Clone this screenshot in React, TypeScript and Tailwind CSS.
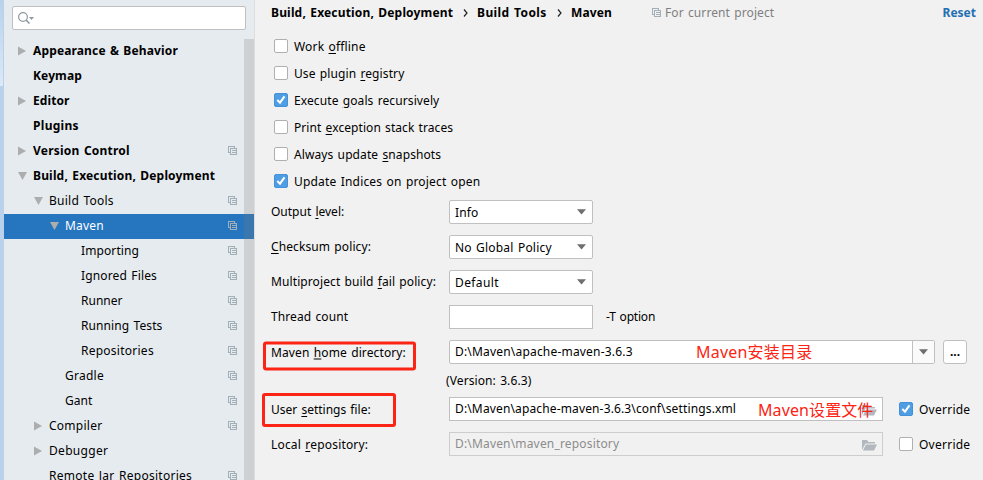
import React from "react";

type Node = { label: string; pad: string; arrow?: "right" | "down"; bold?: boolean; copy?: boolean; selected?: boolean; track: string };

const nodes: Node[] = [
  { label: "Appearance & Behavior", pad: "pl-[13px]", arrow: "right", bold: true, track: "tracking-[0.14px]" },
  { label: "Keymap", pad: "pl-[13px]", bold: true, track: "tracking-[0.12px]" },
  { label: "Editor", pad: "pl-[13px]", arrow: "right", bold: true, track: "tracking-[0.1px]" },
  { label: "Plugins", pad: "pl-[13px]", bold: true, track: "tracking-[0.3px]" },
  { label: "Version Control", pad: "pl-[13px]", arrow: "right", bold: true, copy: true, track: "tracking-[0.22px]" },
  { label: "Build, Execution, Deployment", pad: "pl-[13px]", arrow: "down", bold: true, track: "tracking-[0.17px]" },
  { label: "Build Tools", pad: "pl-[29px]", arrow: "down", copy: true, track: "tracking-[0.25px]" },
  { label: "Maven", pad: "pl-[45px]", arrow: "down", copy: true, selected: true, track: "tracking-[0.2px]" },
  { label: "Importing", pad: "pl-[61px]", copy: true, track: "tracking-[0.1px]" },
  { label: "Ignored Files", pad: "pl-[61px]", copy: true, track: "tracking-[0.15px]" },
  { label: "Runner", pad: "pl-[61px]", copy: true, track: "tracking-[0px]" },
  { label: "Running Tests", pad: "pl-[61px]", copy: true, track: "tracking-[0.1px]" },
  { label: "Repositories", pad: "pl-[61px]", copy: true, track: "tracking-[0.25px]" },
  { label: "Gradle", pad: "pl-[45px]", copy: true, track: "tracking-[0.25px]" },
  { label: "Gant", pad: "pl-[45px]", copy: true, track: "tracking-[0px]" },
  { label: "Compiler", pad: "pl-[29px]", arrow: "right", copy: true, track: "tracking-[0.25px]" },
  { label: "Debugger", pad: "pl-[29px]", arrow: "right", track: "tracking-[0.3px]" },
  { label: "Remote Jar Repositories", pad: "pl-[29px]", copy: true, track: "tracking-[0.27px]" },
];

function CopyIcon() {
  return (
    <svg width="10" height="10" viewBox="0 0 10 10" fill="none" stroke="#a3afb7" shapeRendering="crispEdges" className="shrink-0">
      <path d="M2 6.5H.5V.5h6V2M2.5 2.5h6v6h-6zM4 4.5h3.5M4 6.5h3.5" />
    </svg>
  );
}

function TreeArrow({ dir }: { dir?: "right" | "down" }) {
  return (
    <svg width="16" height="10" viewBox="0 0 16 10" fill="#adadad" className="-mt-[2px] shrink-0">
      {dir === "right" && <path d="M1 .5 9 5 1 9.5z" />}
      {dir === "down" && <path d="M1 1h9L5.500 9z" />}
    </svg>
  );
}

function Check({ on }: { on?: boolean }) {
  return on ? (
    <span className="flex size-[14px] shrink-0 items-center justify-center rounded-[2px] border border-[#4391d9] bg-[#4f9ee3]">
      <svg width="12" height="12" viewBox="0 0 12 12" fill="none" stroke="#fff" strokeWidth="2">
        <path d="M2.300 6 5 8.700 9.500 2.300" />
      </svg>
    </span>
  ) : (
    <span className="size-[14px] shrink-0 rounded-[2px] border border-[#b0b0b0] bg-white" />
  );
}

function Label({ text, track }: { text: string; track: string }) {
  const [a, u, b] = text.split("_");
  return (
    <span className={`whitespace-pre ${track}`}>
      {a}
      {u && <span className="underline decoration-1 underline-offset-2">{u}</span>}
      {b}
    </span>
  );
}

function Down() {
  return (
    <svg width="9" height="6" viewBox="0 0 9 6" fill="#6e6e6e" className="shrink-0">
      <path d="M0 .3h9L4.500 5.500z" />
    </svg>
  );
}

function Folder() {
  return (
    <svg width="15" height="12" viewBox="0 0 15 12" fill="#b2b8bd" className="mt-[1px] shrink-0">
      <path d="M0 11V1h5l1.500 2H13v1.500H3.500z" />
      <path d="M4 5.500h11L12 11.500H1z" />
    </svg>
  );
}

const checks = [
  { text: "Work _o_ffline", track: "tracking-[0.17px]" },
  { text: "Use plugin _r_egistry", track: "tracking-[0.1px]" },
  { text: "Execute _g_oals recursively", on: true, track: "tracking-[0.1px]" },
  { text: "Print _e_xception stack traces", track: "tracking-[0.07px]" },
  { text: "Always update _s_napshots", track: "tracking-[0.1px]" },
  { text: "Update Indices on project open", on: true, track: "tracking-[0.18px]" },
];

const selects = [
  { text: "Output _l_evel:", value: "Info", track: "tracking-[0px]", vtrack: "tracking-[0.1px]" },
  { text: "_C_hecksum policy:", value: "No Global Policy", track: "tracking-[0.1px]", vtrack: "tracking-[0.2px]" },
  { text: "Multiproject build _f_ail policy:", value: "Default", track: "tracking-[0.1px]", vtrack: "tracking-[0.4px]" },
];

function Chevron() {
  return (
    <svg width="14" height="10" viewBox="0 0 14 10" fill="none" stroke="#222" strokeWidth="1.200" className="shrink-0">
      <path d="m1 1.500 3 3.500-3 3.500" />
    </svg>
  );
}

export default function App() {
  return (
    <div className="flex h-[480px] w-[983px] overflow-hidden bg-[#f1f1f1] font-['Noto_Sans','Noto_Sans_CJK_SC',sans-serif] text-[12px] leading-[18px] whitespace-pre text-black [word-spacing:1px]">
      <div className="flex w-1 shrink-0 flex-col bg-[#b9d1ea]">
        <div className="h-[86px] w-[3px] bg-linear-to-b from-[#b9d1ea] to-[#dce9f7]" />
      </div>
      <aside className="flex w-[250px] shrink-0 flex-col bg-[#e6ebef]">
        <div className="ml-2 mt-[6px] flex h-6 w-[234px] shrink-0 items-center rounded-[2px] border border-[#c0c0c0] bg-white pl-[5px]">
          <svg width="17" height="12" viewBox="0 0 17 12" fill="none" stroke="#8f9ba1" strokeWidth="1.200">
            <circle cx="5" cy="5" r="4.400" />
            <path d="m8 8 3.500 3.500" strokeWidth="1.600" />
            <path d="M11 5h5l-2.500 3z" fill="#8f9ba1" stroke="none" />
          </svg>
        </div>
        <div className="relative mt-[9px] flex flex-1 flex-col">
          {nodes.map((n) => (
            <div key={n.label} className={`flex h-[25px] shrink-0 items-center ${n.pad} ${n.selected ? "bg-[#2675bf] text-white" : ""}`}>
              <TreeArrow dir={n.arrow} />
              <span className={`-mt-[2px] flex-1 ${n.bold ? "font-bold" : ""} ${n.track}`}>{n.label}</span>
              {n.copy && <span className="-mt-[2px] mr-4"><CopyIcon /></span>}
            </div>
          ))}
          <div className="absolute inset-y-0 right-0 w-[10px] bg-[#8080804d] opacity-80" />
        </div>
      </aside>
      <div className="w-px shrink-0 bg-[#dedede]" />
      <main className="flex flex-1 flex-col pl-4">
        <header className="flex h-[25px] shrink-0 items-center font-bold">
          <span className="w-[192px] tracking-[0.17px]">Build, Execution, Deployment</span>
          <Chevron />
          <span className="w-[80px] tracking-[0.4px]">Build Tools</span>
          <Chevron />
          <span className="w-[81px] tracking-[0.1px]">Maven</span>
          <CopyIcon />
          <span className="ml-[3px] flex-1 font-normal tracking-[0.1px] text-[#808080]">For current project</span>
          <span className="mr-[7px] tracking-[0px] text-[#2470b3]">Reset</span>
        </header>
        <div className="mt-[7px] flex flex-col pl-[3px]">
          {checks.map((c) => (
            <div key={c.text} className="flex h-[27px] items-center gap-[6px]">
              <Check on={c.on} />
              <span className="mt-[2px] flex"><Label text={c.text} track={c.track} /></span>
            </div>
          ))}
        </div>
        <div className="mt-[6px] flex flex-col gap-[11px]">
          {selects.map((s) => (
            <div key={s.value} className="flex h-6 items-center">
              <div className="w-[178px]"><Label text={s.text} track={s.track} /></div>
              <div className="flex h-6 w-[144px] items-center justify-between rounded-[2px] border border-[#c0c0c0] bg-white pl-[5px] pr-[6px]">
                <span className={`mt-[2px] ${s.vtrack}`}>{s.value}</span>
                <Down />
              </div>
            </div>
          ))}
          <div className="flex h-6 items-center">
            <span className="w-[178px] tracking-[0.1px]">Thread count</span>
            <div className="h-6 w-[144px] border border-[#c0c0c0] bg-white" />
            <span className="ml-[13px] tracking-[-0.2px]">-T option</span>
          </div>
        </div>
        <div className="mt-[11px] flex h-6 items-center">
          <div className="-ml-2 flex h-[29px] w-[153px] shrink-0 translate-y-[3.5px] items-center rounded-[3px] border-3 border-[#fc2414] pb-[6px] pl-[5px]">
            <Label text="Maven _h_ome directory:" track="tracking-[0.12px]" />
          </div>
          <div className="ml-[33px] flex h-6 w-[486px] items-center rounded-[2px] border border-[#c0c0c0] bg-white pl-[5px]">
            <span className="w-[241px] tracking-[0.19px]">D:\Maven\apache-maven-3.6.3</span>
            <span className="flex-1 text-[16px] tracking-[0.2px] text-[#fc2414]">Maven安装目录</span>
            <div className="flex h-full w-[22px] items-center justify-center border-l border-[#c0c0c0] bg-[#fafafa]"><Down /></div>
          </div>
          <div className="ml-2 flex size-6 items-center justify-center rounded-[3px] border border-[#c0c0c0] bg-white font-bold">...</div>
        </div>
        <div className="mt-[8px] h-[18px] pl-[175px] tracking-[0.1px]">(Version: 3.6.3)</div>
        <div className="mt-[7px] flex h-6 items-center">
          <div className="-ml-[9px] flex h-[34px] w-[134px] shrink-0 translate-y-[1px] items-center rounded-[3px] border-3 border-[#fc2414] pl-[6px]">
            <Label text="User _s_ettings file:" track="tracking-[0px]" />
          </div>
          <div className="ml-[53px] flex h-6 w-[434px] items-center border border-[#c0c0c0] bg-white pl-[5px]">
            <span className="w-[303px] tracking-[0.14px]">D:\Maven\apache-maven-3.6.3\conf\settings.xml</span>
            <span className="z-10 mt-[2px] w-[104px] text-[16px] tracking-[0.1px] text-[#fc2414]">Maven设置文件</span>
            <Folder />
          </div>
          <div className="ml-4 flex items-center gap-[6px]"><Check on /><span className="mt-[2px] tracking-[0.25px]">Override</span></div>
        </div>
        <div className="mt-[11px] flex h-6 items-center">
          <div className="mt-[2px] w-[178px]"><Label text="Local _r_epository:" track="tracking-[0.18px]" /></div>
          <div className="flex h-6 w-[434px] items-center border border-[#cdcdcd] pl-[5px] text-[#8c8c8c]">
            <span className="w-[407px] tracking-[0.17px]">D:\Maven\maven_repository</span>
            <Folder />
          </div>
          <div className="ml-4 flex items-center gap-[6px]"><Check /><span className="mt-[2px] tracking-[0.25px]">Override</span></div>
        </div>
      </main>
    </div>
  );
}
